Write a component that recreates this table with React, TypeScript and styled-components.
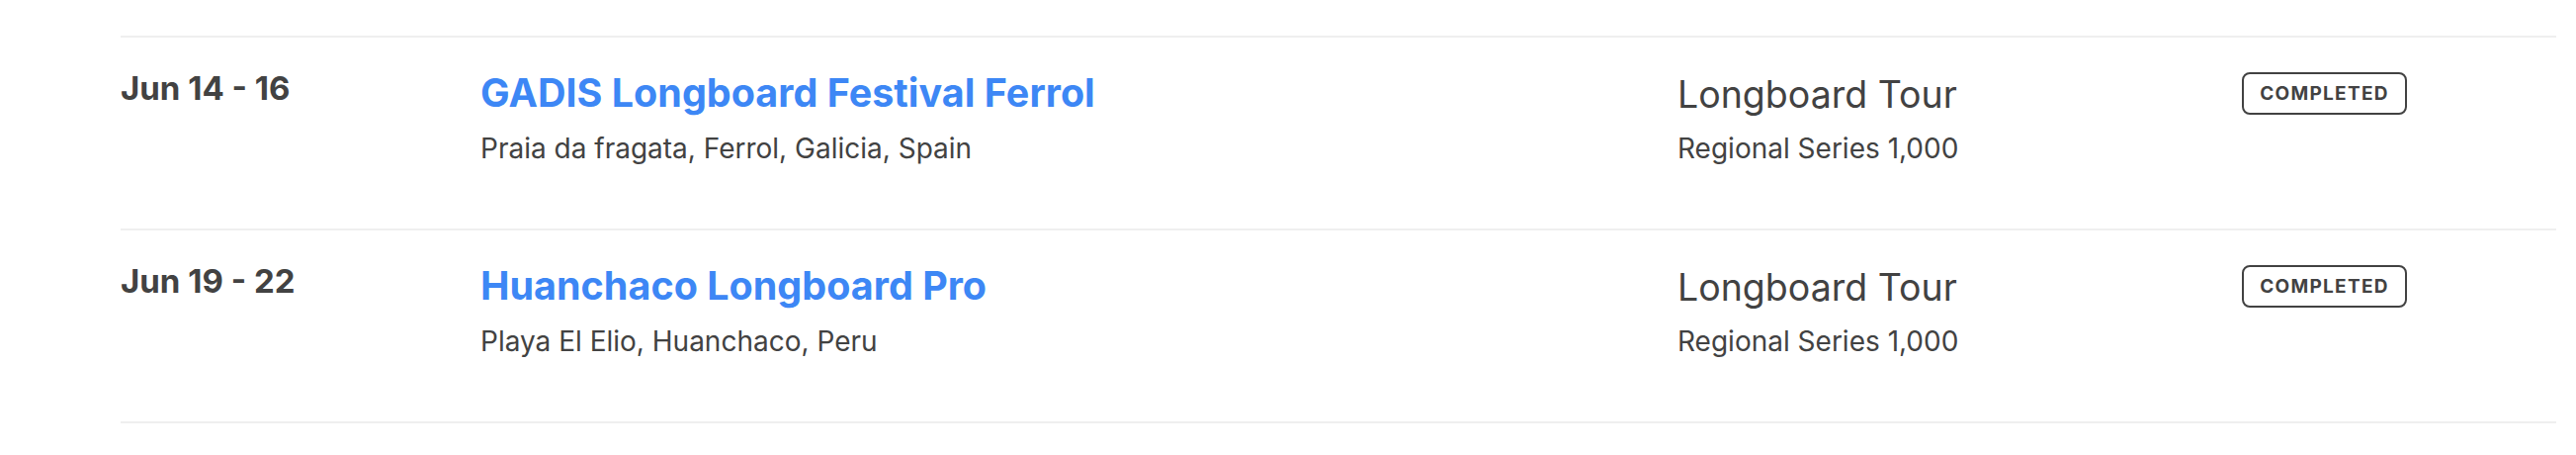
import React from 'react'
import styled, { createGlobalStyle } from 'styled-components'

const GlobalStyle = createGlobalStyle`
  body {
    margin: 0;
    background: #ffffff;
    font-family: Inter, "Noto Sans", sans-serif;
    color: #424242;
  }
`

const EventList = styled.div`
  margin: 36px 20px 0 122px;
  width: 2464px;
  border-top: 2px solid #efefef;
`

const EventRow = styled.div`
  display: grid;
  grid-template-columns: 364px 1211px 571px 1fr;
  align-items: start;
  height: 195px;
  padding-top: 32px;
  box-sizing: border-box;
  border-bottom: 2px solid #efefef;
`

const DateText = styled.div`
  font-size: 33px;
  font-weight: 700;
  line-height: 1.2;
  color: #424242;
`

const InfoCol = styled.div`
  display: flex;
  flex-direction: column;
  padding-top: 1px;
`

const EventTitle = styled.a`
  font-size: 39.5px;
  font-weight: 700;
  line-height: 1.2;
  color: #3d87f5;
  text-decoration: none;
`

const Location = styled.div`
  margin-top: 11px;
  font-size: 28px;
  line-height: 1.5;
  color: #424242;
`

const TourCol = styled.div`
  display: flex;
  flex-direction: column;
  padding-top: 3px;
`

const TourName = styled.div`
  font-size: 37.5px;
  line-height: 1.2;
  color: #424242;
`

const Series = styled.div`
  margin-top: 11px;
  font-size: 28px;
  line-height: 1.5;
  color: #424242;
`

const StatusBadge = styled.span`
  display: inline-flex;
  align-items: center;
  justify-content: center;
  margin-top: 3px;
  width: 167px;
  height: 43px;
  box-sizing: border-box;
  border: 2px solid #424242;
  border-radius: 8px;
  font-size: 19px;
  font-weight: 700;
  letter-spacing: 1.3px;
  color: #424242;
`

const events = [
  {
    date: 'Jun 14 - 16',
    name: 'GADIS Longboard Festival Ferrol',
    location: 'Praia da fragata, Ferrol, Galicia, Spain',
    tour: 'Longboard Tour',
    series: 'Regional Series 1,000',
    status: 'COMPLETED',
  },
  {
    date: 'Jun 19 - 22',
    name: 'Huanchaco Longboard Pro',
    location: 'Playa El Elio, Huanchaco, Peru',
    tour: 'Longboard Tour',
    series: 'Regional Series 1,000',
    status: 'COMPLETED',
  },
]

export default function App() {
  return (
    <>
      <GlobalStyle />
      <EventList>
        {events.map((ev, i) => (
          <EventRow key={i}>
            <DateText>{ev.date}</DateText>
            <InfoCol>
              <EventTitle href="#">{ev.name}</EventTitle>
              <Location>{ev.location}</Location>
            </InfoCol>
            <TourCol>
              <TourName>{ev.tour}</TourName>
              <Series>{ev.series}</Series>
            </TourCol>
            <div>
              <StatusBadge>{ev.status}</StatusBadge>
            </div>
          </EventRow>
        ))}
      </EventList>
    </>
  )
}
